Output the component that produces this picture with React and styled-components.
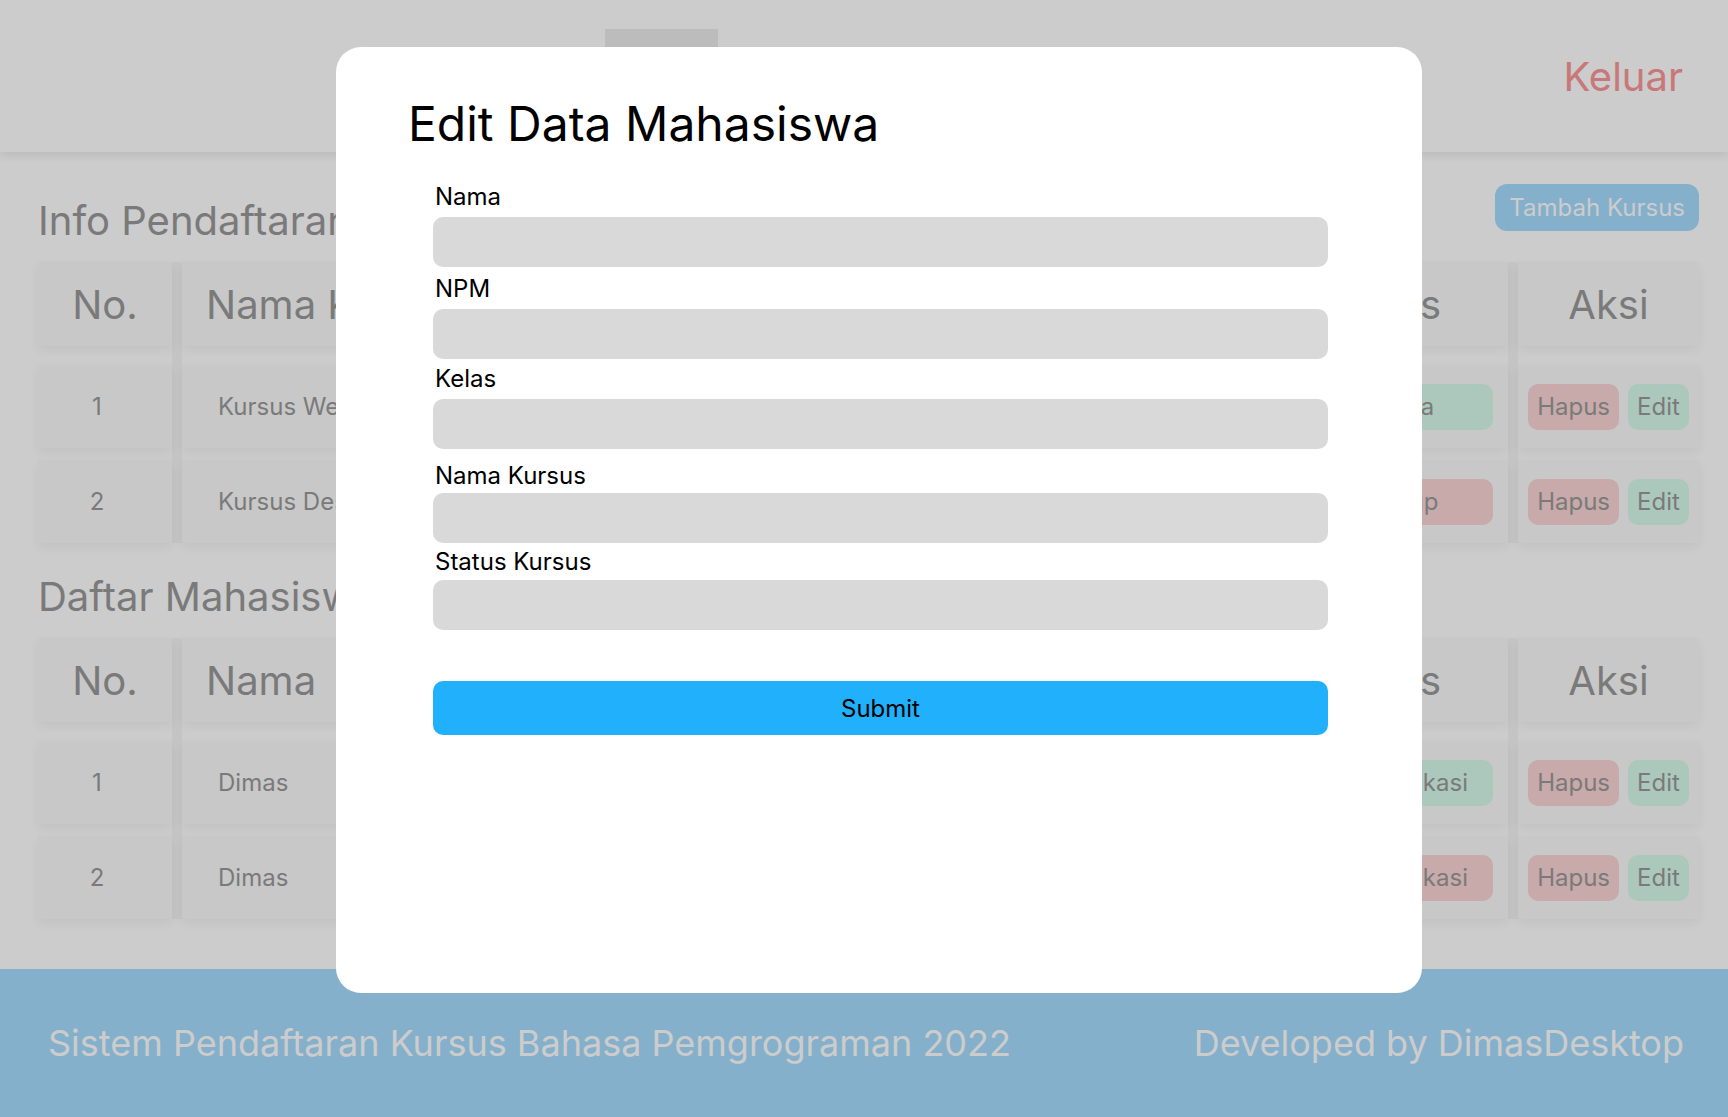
import React from 'react';
import styled, { createGlobalStyle } from 'styled-components';

const GlobalStyle = createGlobalStyle`
  html, body {
    margin: 0;
    padding: 0;
  }
  body {
    font-family: Inter, "Noto Sans", sans-serif;
    background: #fff;
  }
  * {
    box-sizing: border-box;
  }
`;

const Page = styled.div`
  min-height: 100vh;
  display: flex;
  flex-direction: column;
`;

const Header = styled.header`
  height: 152px;
  display: flex;
  align-items: center;
  justify-content: space-between;
  padding: 0 45px 0 605px;
  background: #fff;
  box-shadow: 0 4px 8px rgba(0, 0, 0, 0.08);
  position: relative;
  z-index: 1;
`;

const Nav = styled.nav`
  display: flex;
  align-items: center;
  gap: 24px;
`;

const NavLink = styled.a`
  height: 94px;
  display: flex;
  align-items: center;
  padding: 0 9px;
  font-size: 24px;
  color: #999;
  background: ${p => (p.$active ? '#ebebeb' : 'transparent')};
`;

const Logout = styled.a`
  font-size: 40px;
  color: #fa9696;
`;

const Main = styled.main`
  flex: 1;
  padding: 32px 29px 50px 38px;
`;

const SectionHead = styled.div`
  display: flex;
  justify-content: space-between;
  align-items: flex-start;
  margin-top: ${p => p.$top || '0px'};
`;

const Heading = styled.h2`
  margin: ${p => p.$mt || '12px'} 0 0;
  font-size: 40px;
  font-weight: 400;
  line-height: normal;
  color: #999;
`;

const AddButton = styled.button`
  font-family: Inter, sans-serif;
  font-size: 24px;
  color: #fff;
  background: #a5dcfe;
  border: none;
  border-radius: 12px;
  padding: 9px 14px;
`;

const TableGrid = styled.div`
  display: grid;
  grid-template-columns: ${p => p.$cols};
  column-gap: 10px;
  background: #f6f6f6;
  margin-top: 17px;
`;

const Column = styled.div`
  display: flex;
  flex-direction: column;
  gap: 12px;
  background: #fff;
`;

const HeadCell = styled.div`
  height: 84px;
  margin-bottom: 7px;
  display: flex;
  align-items: center;
  justify-content: ${p => p.$justify};
  padding: ${p => p.$pad};
  background: #fbfbfb;
  box-shadow: 0 4px 10px rgba(0, 0, 0, 0.05);
  font-size: 40px;
  color: #999;
  white-space: nowrap;
  overflow: hidden;
`;

const Cell = styled.div`
  height: 83px;
  display: flex;
  align-items: center;
  justify-content: ${p => p.$justify};
  padding: ${p => p.$pad};
  gap: 9px;
  background: #fbfbfb;
  box-shadow: 0 4px 10px rgba(0, 0, 0, 0.05);
  font-size: 24px;
  color: #999;
  white-space: nowrap;
`;

const tones = {
  green: '#d8fbec',
  red: '#fbd5d5',
};

const Badge = styled.span`
  flex-shrink: 0;
  min-width: 174px;
  height: 46px;
  padding: 0 25px;
  display: flex;
  align-items: center;
  justify-content: center;
  border-radius: 10px;
  background: ${p => tones[p.$tone]};
`;

const ActionButton = styled.button`
  font-family: Inter, sans-serif;
  font-size: 24px;
  color: #999;
  height: 46px;
  padding: 0 9px;
  border: none;
  border-radius: 10px;
  background: ${p => tones[p.$tone]};
`;

const Footer = styled.footer`
  height: 148px;
  display: flex;
  align-items: center;
  justify-content: space-between;
  padding: 0 44px 0 48px;
  background: #a5dcfe;
  color: #fff;
  font-size: 36px;
`;

const Overlay = styled.div`
  position: fixed;
  inset: 0;
  z-index: 10;
  background: rgba(0, 0, 0, 0.2);
  display: flex;
  align-items: flex-start;
  padding: 47px 0 0 336px;
`;

const Modal = styled.div`
  width: 1086px;
  height: 946px;
  background: #fff;
  border-radius: 25px;
  padding: 47px 70px 0 72px;
`;

const ModalTitle = styled.h2`
  margin: 0;
  font-size: 48px;
  font-weight: 400;
  line-height: normal;
  color: #000;
`;

const Form = styled.form`
  width: 895px;
  margin: 29px 0 0 25px;
  display: flex;
  flex-direction: column;
`;

const Field = styled.div`
  display: flex;
  flex-direction: column;
  margin-top: ${p => p.$space}px;
`;

const FieldLabel = styled.label`
  font-size: 24px;
  line-height: normal;
  color: #000;
  margin-bottom: ${p => p.$below}px;
  padding-left: 2px;
`;

const Input = styled.input`
  height: 50px;
  border: none;
  border-radius: 10px;
  background: #d9d9d9;
  font-family: Inter, sans-serif;
  font-size: 20px;
  padding: 0 16px;
  outline: none;
`;

const Submit = styled.button`
  margin-top: 51px;
  height: 54px;
  border: none;
  border-radius: 10px;
  background: #20b0fc;
  font-family: Inter, sans-serif;
  font-size: 24px;
  color: #000;
`;

const head = {
  center: { justify: 'center', pad: '0' },
  left: { justify: 'flex-start', pad: '0 0 0 24px' },
  status: { justify: 'flex-end', pad: '0 67px 0 0' },
};

const body = {
  center: { justify: 'center', pad: '0 16px 0 0' },
  left: { justify: 'flex-start', pad: '0 0 0 36px' },
  status: { justify: 'flex-end', pad: '0 15px 0 0' },
  actions: { justify: 'center', pad: '0' },
};

const courseColumns = [
  { title: 'No.', width: '134px', head: 'center', kind: 'center', cells: ['1', '2'] },
  { title: 'Nama Kursus', width: '300px', head: 'left', kind: 'left', cells: ['Kursus Web Dasar', 'Kursus Desktop Java'] },
  { title: 'Bahasa', width: '250px', head: 'left', kind: 'left', cells: ['JavaScript', 'Java'] },
  { title: 'Pengajar', width: '1fr', head: 'left', kind: 'left', cells: ['Pak Budi', 'Bu Sari'] },
  { title: 'Status', width: '214px', head: 'status', kind: 'status', cells: [['Buka', 'green'], ['Tutup', 'red']] },
  { title: 'Aksi', width: '181px', head: 'center', kind: 'actions', cells: [1, 2] },
];

const studentColumns = [
  { title: 'No.', width: '134px', head: 'center', kind: 'center', cells: ['1', '2'] },
  { title: 'Nama', width: '260px', head: 'left', kind: 'left', cells: ['Dimas', 'Dimas'] },
  { title: 'NPM', width: '230px', head: 'left', kind: 'left', cells: ['2010631170', '2010631170'] },
  { title: 'Kelas', width: '160px', head: 'left', kind: 'left', cells: ['5A', '5A'] },
  { title: 'Nama Kursus', width: '1fr', head: 'left', kind: 'left', cells: ['Kursus Web Dasar', 'Kursus Desktop Java'] },
  { title: 'Status', width: '260px', head: 'status', kind: 'status', cells: [['Lulus Sertifikasi', 'green'], ['Gagal Sertifikasi', 'red']] },
  { title: 'Aksi', width: '181px', head: 'center', kind: 'actions', cells: [1, 2] },
];

const renderCell = (col, value, i) => {
  const b = body[col.kind];
  let content = value;
  if (col.kind === 'status') content = <Badge $tone={value[1]}>{value[0]}</Badge>;
  if (col.kind === 'actions')
    content = (
      <>
        <ActionButton $tone="red">Hapus</ActionButton>
        <ActionButton $tone="green">Edit</ActionButton>
      </>
    );
  return (
    <Cell key={i} $justify={b.justify} $pad={b.pad}>
      {content}
    </Cell>
  );
};

const DataTable = ({ columns }) => (
  <TableGrid $cols={columns.map(c => c.width).join(' ')}>
    {columns.map(col => (
      <Column key={col.title}>
        <HeadCell $justify={head[col.head].justify} $pad={head[col.head].pad}>
          {col.title}
        </HeadCell>
        {col.cells.map((v, i) => renderCell(col, v, i))}
      </Column>
    ))}
  </TableGrid>
);

// spacing above each field and between its label and input
const fields = [
  { id: 'nama', label: 'Nama', space: 0, below: 6 },
  { id: 'npm', label: 'NPM', space: 7, below: 6 },
  { id: 'kelas', label: 'Kelas', space: 5, below: 6 },
  { id: 'kursus', label: 'Nama Kursus', space: 12, below: 3 },
  { id: 'status', label: 'Status Kursus', space: 4, below: 4 },
];

const App = () => (
  <Page>
    <GlobalStyle />
    <Header>
      <Nav>
        <NavLink $active>Beranda</NavLink>
        <NavLink>Kursus</NavLink>
        <NavLink>Mahasiswa</NavLink>
      </Nav>
      <Logout>Keluar</Logout>
    </Header>
    <Main>
      <SectionHead>
        <Heading>Info Pendaftaran Kursus</Heading>
        <AddButton>Tambah Kursus</AddButton>
      </SectionHead>
      <DataTable columns={courseColumns} />
      <SectionHead $top="29px">
        <Heading $mt="0px">Daftar Mahasiswa</Heading>
      </SectionHead>
      <DataTable columns={studentColumns} />
    </Main>
    <Footer>
      <span>Sistem Pendaftaran Kursus Bahasa Pemgrograman 2022</span>
      <span>Developed by DimasDesktop</span>
    </Footer>
    <Overlay>
      <Modal>
        <ModalTitle>Edit Data Mahasiswa</ModalTitle>
        <Form onSubmit={e => e.preventDefault()}>
          {fields.map(f => (
            <Field key={f.id} $space={f.space}>
              <FieldLabel htmlFor={f.id} $below={f.below}>
                {f.label}
              </FieldLabel>
              <Input id={f.id} type="text" />
            </Field>
          ))}
          <Submit type="submit">Submit</Submit>
        </Form>
      </Modal>
    </Overlay>
  </Page>
);

export default App;
